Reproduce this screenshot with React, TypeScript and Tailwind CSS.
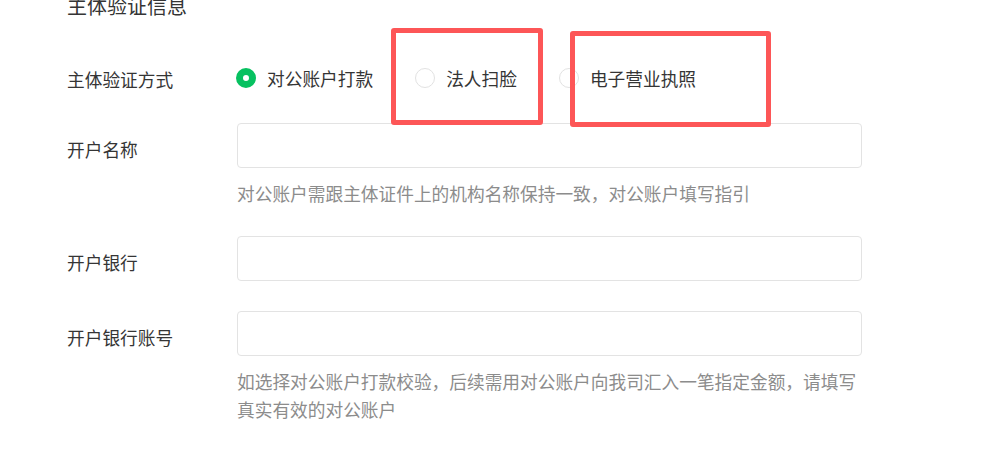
import React from "react";

const font = { fontFamily: '"Noto Sans CJK SC", "Noto Sans", sans-serif' };

type Option = { label: string; checked?: boolean };

const options: Option[] = [
  { label: "对公账户打款", checked: true },
  { label: "法人扫脸" },
  { label: "电子营业执照" },
];

function Radio({ label, checked }: Option) {
  return (
    <label className="flex items-center gap-[11px] mr-[42px] cursor-pointer">
      {checked ? (
        <span className="w-[20px] h-[20px] rounded-full border-[7px] border-[#07c160] bg-white" />
      ) : (
        <span className="w-[20px] h-[20px] rounded-full border border-[#e2e2e2] bg-white" />
      )}
      <span className="text-[17.7px] leading-[28px] text-[#353535]">{label}</span>
    </label>
  );
}

function Field({ label, tip, className }: { label: string; tip?: string[]; className?: string }) {
  return (
    <div className={`flex items-start ${className ?? ""}`}>
      <div className="w-[170px] h-[45px] flex items-center pt-[8px] text-[17.7px] text-[#353535]">
        {label}
      </div>
      <div className="w-[625px]">
        <input className="block w-full h-[45px] border border-[#e3e3e3] rounded-[4px] bg-white outline-none px-3" />
        {tip && (
          <p className="mt-[11px] w-[660px] text-[17.7px] leading-[28px] text-[#8c8c8c]">
            {tip.map((line) => (
              <span key={line} className="block">
                {line}
              </span>
            ))}
          </p>
        )}
      </div>
    </div>
  );
}

export default function App() {
  return (
    <div className="relative w-[994px] h-[460px] bg-white overflow-hidden" style={font}>
      <div className="pl-[67px]">
        <h2 className="mt-[-8px] h-[28px] leading-[28px] text-[20px] font-normal text-[#353535]">
          主体验证信息
        </h2>

        <div className="flex items-center mt-[38px] h-[40px]">
          <div className="w-[170px] text-[17.7px] pt-[3px] text-[#353535]">主体验证方式</div>
          <div className="flex items-center ml-[-1px]">
            {options.map((o) => (
              <Radio key={o.label} {...o} />
            ))}
          </div>
        </div>

        <Field
          className="mt-[25px]"
          label="开户名称"
          tip={["对公账户需跟主体证件上的机构名称保持一致，对公账户填写指引"]}
        />
        <Field className="mt-[29px]" label="开户银行" />
        <Field
          className="mt-[30px]"
          label="开户银行账号"
          tip={[
            "如选择对公账户打款校验，后续需用对公账户向我司汇入一笔指定金额，请填写",
            "真实有效的对公账户",
          ]}
        />
      </div>

      {/* annotation boxes */}
      <div className="absolute left-[391px] top-[28px] w-[152px] h-[97px] border-[5px] border-[#fd5657] rounded-[3px]" />
      <div className="absolute left-[570px] top-[31px] w-[201px] h-[96px] border-[5px] border-[#fd5657] rounded-[3px]" />
    </div>
  );
}
